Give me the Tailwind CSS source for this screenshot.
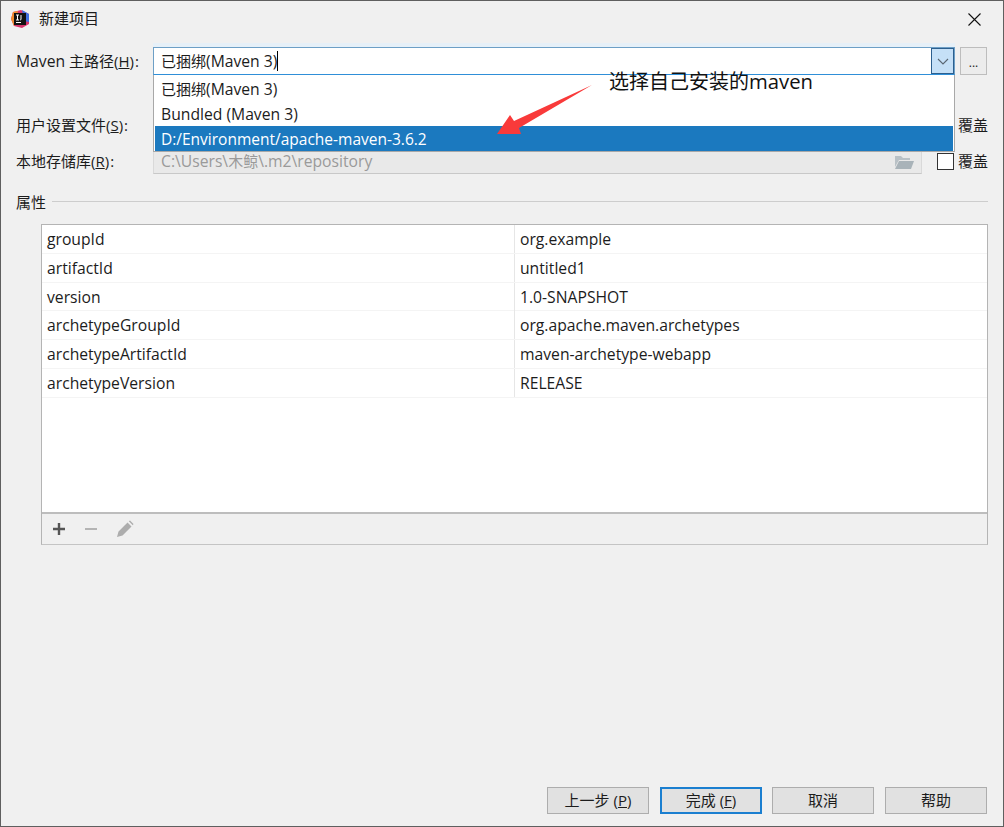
<!DOCTYPE html>
<html lang="zh-CN">
<head>
    <meta charset="UTF-8">
    <meta name="viewport" content="width=device-width, initial-scale=1.0">
    <title>新建项目</title>
    <script src="https://cdn.jsdelivr.net/npm/@tailwindcss/browser@4"></script>
</head>
<body class="bg-[#f0f0f0]">
    <div class="relative w-[1004px] h-[827px] flex flex-col bg-[#f0f0f0] border border-[#5f5f5f] overflow-hidden text-[15px] leading-[20px] text-[#1c1c1c] font-['Open_Sans','Noto_Sans_CJK_SC',sans-serif]">

        <!-- title bar -->
        <div class="h-[37px] flex items-center pl-[9px] pr-[22px] shrink-0">
            <svg class="w-[20px] h-[20px] mr-[9px] -mt-[1px]" viewBox="0 0 20 20">
                <path d="M3 3 L11 1 L19 5 L19 15 L12 19 L4 17 L1 10 Z" fill="#d6336c"/>
                <path d="M1 10 L3 3 L8 2 L6 14 L4 17 Z" fill="#f08c2e"/>
                <path d="M12 1 L19 5 L19 13 L14 12 Z" fill="#3f6fe0"/>
                <rect x="4" y="4" width="12" height="12" fill="#111"/>
                <rect x="6" y="13" width="5" height="1" fill="#fff"/>
                <path d="M6 6h3M7.5 6v5M6 11h3M11 6v4.2q0 .8-1 .8" fill="none" stroke="#fff" stroke-width="1"/>
            </svg>
            <span class="-mt-[3px]">新建项目</span>
            <svg class="ml-auto w-[13px] h-[13px]" viewBox="0 0 13 13">
                <path d="M.5 .5L12.5 12.5M12.5 .5L.5 12.5" stroke="#111" stroke-width="1.1" fill="none"/>
            </svg>
        </div>

        <!-- maven home -->
        <div class="h-[28px] mt-[9px] flex items-center pl-[15px] pr-[15px] shrink-0">
            <label class="w-[137px] shrink-0"><span class="text-[15.7px]">Maven</span> 主路径(<span class="underline">H</span>)<span class="ml-[1px]">:</span></label>
            <div class="w-[802px] h-[28px] shrink-0 flex bg-white border border-[#6d9fc6] border-b-[#2f8fd8] shadow-[0_-4px_0_#e6f0f8]">
                <span class="pl-[7px] leading-[26px]">已捆绑<span class="text-[15.7px]">(Maven 3)</span></span>
                <span class="w-px h-[20px] mt-[3px] bg-black"></span>
                <span class="ml-auto w-[23px] bg-[#c5e0f7] border border-[#2c5f8e] flex items-center justify-center">
                    <svg class="w-[12px] h-[7px]" viewBox="0 0 12 7"><path d="M1 1L6 6L11 1" stroke="#5a6672" stroke-width="1.1" fill="none"/></svg>
                </span>
            </div>
            <button class="ml-[5px] w-[27px] h-[28px] bg-[#ececec] border border-[#bdbdbd] leading-[30px] text-[12px]">...</button>
        </div>

        <!-- settings file -->
        <div class="h-[25px] mt-[37px] flex items-center pl-[15px] pr-[15px] shrink-0">
            <label class="w-[137px] shrink-0">用户设置文件(<span class="underline">S</span>)<span class="ml-[1px]">:</span></label>
            <span class="ml-auto">覆盖</span>
        </div>

        <!-- local repository -->
        <div class="h-[25px] mt-[12px] flex items-center pl-[15px] pr-[15px] shrink-0">
            <label class="w-[137px] shrink-0 -mt-[2px]">本地存储库(<span class="underline">R</span>)<span class="ml-[1px]">:</span></label>
            <div class="w-[769px] h-[25px] shrink-0 flex items-center pl-[7px] pr-[7px] bg-[#e9e9e9] border border-[#d9d9d9] border-b-[#c8c8c8] text-[#9a9a9a]">
                <span class="text-[15.7px] -mt-[2px]">C:\Users\<span class="text-[15px]">木鲸</span>\.m2\repository</span>
                <svg class="ml-auto w-[19px] h-[14px]" viewBox="0 0 19 14">
                    <path d="M0 1h6l2 2h7v2H4L0 12Z" fill="#b9c1c6"/>
                    <path d="M4 6h15l-3 8H0Z" fill="#a9b3b9"/>
                </svg>
            </div>
            <span class="ml-[15px] w-[17px] h-[17px] bg-white border border-[#333] shrink-0 -mt-[1px]"></span>
            <span class="ml-[4px] shrink-0 whitespace-nowrap -mt-[2px]">覆盖</span>
        </div>

        <!-- properties legend -->
        <div class="h-[20px] mt-[18px] flex items-center pl-[15px] pr-[15px] shrink-0">
            <span>属性</span>
            <span class="ml-[6px] flex-1 h-px bg-[#cdcdcd] -mt-[1px]"></span>
        </div>

        <!-- properties table -->
        <div class="ml-[40px] mr-[15px] mt-[12px] w-[947px] h-[321px] flex flex-col border border-[#b4b4b4] border-b-[#c4c4c4] shrink-0 text-[15.7px]">
            <div class="h-[287px] bg-white shrink-0">
                <div class="h-[29px] grid grid-cols-[473px_1fr] border-b border-[#f4f4f4]">
                    <span class="pl-[5px] leading-[28px] border-r border-[#e6e6e6]">groupId</span>
                    <span class="pl-[5px] leading-[28px]">org.example</span>
                </div>
                <div class="h-[29px] grid grid-cols-[473px_1fr] border-b border-[#f4f4f4]">
                    <span class="pl-[5px] leading-[28px] border-r border-[#e6e6e6]">artifactId</span>
                    <span class="pl-[5px] leading-[28px]">untitled1</span>
                </div>
                <div class="h-[28px] grid grid-cols-[473px_1fr] border-b border-[#f4f4f4]">
                    <span class="pl-[5px] leading-[28px] border-r border-[#e6e6e6]">version</span>
                    <span class="pl-[5px] leading-[28px]">1.0-SNAPSHOT</span>
                </div>
                <div class="h-[29px] grid grid-cols-[473px_1fr] border-b border-[#f4f4f4]">
                    <span class="pl-[5px] leading-[28px] border-r border-[#e6e6e6]">archetypeGroupId</span>
                    <span class="pl-[5px] leading-[28px]">org.apache.maven.archetypes</span>
                </div>
                <div class="h-[29px] grid grid-cols-[473px_1fr] border-b border-[#f4f4f4]">
                    <span class="pl-[5px] leading-[28px] border-r border-[#e6e6e6]">archetypeArtifactId</span>
                    <span class="pl-[5px] leading-[28px]">maven-archetype-webapp</span>
                </div>
                <div class="h-[29px] grid grid-cols-[473px_1fr] border-b border-[#f4f4f4]">
                    <span class="pl-[5px] leading-[28px] border-r border-[#e6e6e6]">archetypeVersion</span>
                    <span class="pl-[5px] leading-[28px]">RELEASE</span>
                </div>
            </div>
            <div class="flex-1 flex items-center gap-[18px] pl-[10px] border-t-2 border-[#bdbdbd]">
                <svg class="w-[14px] h-[14px]" viewBox="0 0 14 14"><path d="M7 1V13M1 7H13" stroke="#555" stroke-width="2.4" fill="none"/></svg>
                <svg class="w-[14px] h-[14px]" viewBox="0 0 14 14"><path d="M1 7H13" stroke="#b4b4b4" stroke-width="2" fill="none"/></svg>
                <svg class="w-[18px] h-[18px]" viewBox="0 0 18 18"><path d="M1 17L2.5 11.5L11.5 2.5L15.5 6.5L6.5 15.5Z M12.8 1.2L14 0.5L17.5 4L16.8 5.2Z" fill="#adadad"/></svg>
            </div>
        </div>

        <!-- bottom buttons -->
        <div class="mt-auto mb-[12px] pr-[16px] flex justify-end shrink-0">
            <button class="w-[102px] h-[27px] pb-[2px] bg-[#e1e1e1] border border-[#adadad]">上一步 (<span class="underline">P</span>)</button>
            <button class="ml-[11px] w-[102px] h-[27px] pb-[2px] bg-[#e1e1e1] border-2 border-[#1b7fd0]">完成 (<span class="underline">F</span>)</button>
            <button class="ml-[10px] w-[102px] h-[27px] pb-[2px] bg-[#e1e1e1] border border-[#adadad]">取消</button>
            <button class="ml-[11px] w-[102px] h-[27px] pb-[2px] bg-[#e1e1e1] border border-[#adadad]">帮助</button>
        </div>

        <!-- open combo list, over the form -->
        <div class="absolute left-[152px] top-[74px] w-[802px] h-[77px] pt-[2px] px-[1px] bg-white border-r border-b border-[#a8a8a8] border-l">
            <div class="h-[25px] pl-[6px] leading-[25px]">已捆绑<span class="text-[15.7px]">(Maven 3)</span></div>
            <div class="h-[24px] pl-[6px] leading-[24px] text-[15.7px]">Bundled (Maven 3)</div>
            <div class="h-[25px] pl-[6px] leading-[26px] bg-[#1b79bf] text-white text-[15.5px]">D:/Environment/apache-maven-3.6.2</div>
        </div>

        <!-- screenshot annotation -->
        <svg class="absolute left-[0px] top-[0px] w-[1002px] h-[200px] pointer-events-none" viewBox="0 0 1002 200">
            <path d="M591 84L513 120L509 114L496 133L520 133L518 127Z" fill="#f93a3a"/>
        </svg>
        <span class="absolute left-[608px] top-[67px] text-[20px] leading-[26px] text-[#111]">选择自己安装的<span class="text-[20.3px]">maven</span></span>
    </div>
</body>
</html>
